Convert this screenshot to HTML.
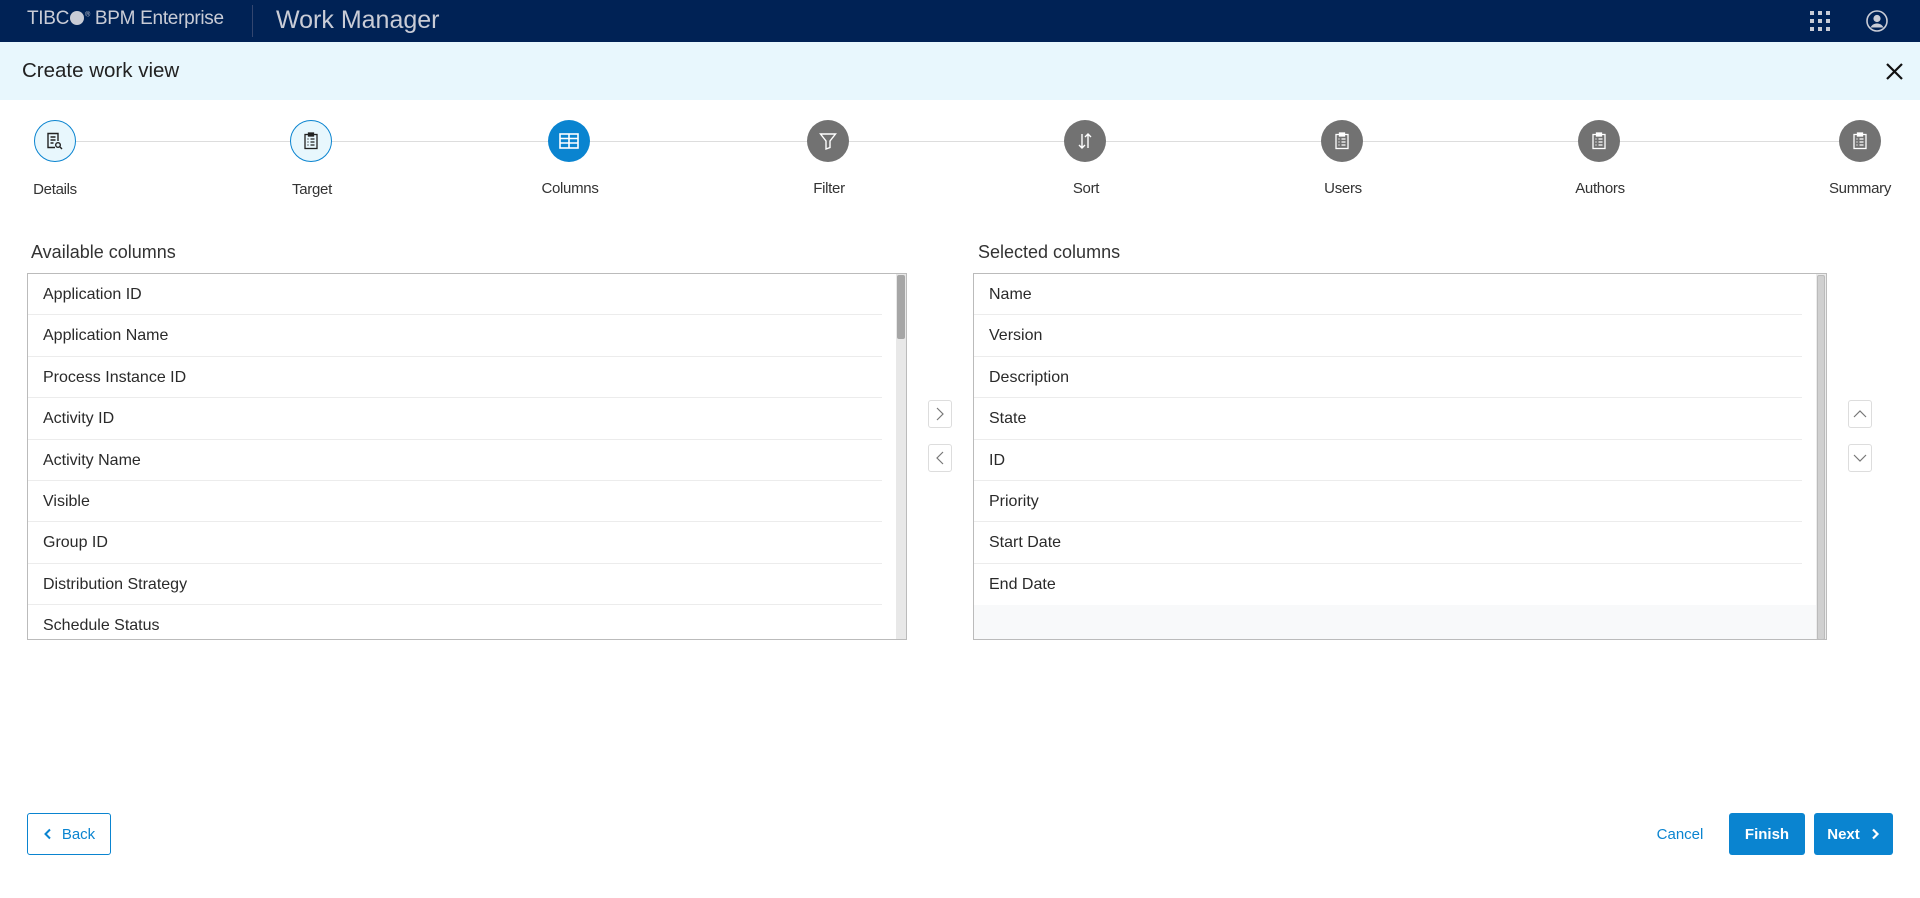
<!DOCTYPE html>
<html><head><meta charset="utf-8"><style>
*{box-sizing:border-box;margin:0;padding:0}
body{width:1920px;height:898px;overflow:hidden;background:#fff;font-family:"Liberation Sans",Arial,sans-serif;position:relative;color:#222}
.hdr{position:absolute;left:0;top:0;width:1920px;height:42px;background:#002255}
.band{position:absolute;left:0;top:42px;width:1920px;height:58px;background:#e8f7fd}
.abs{position:absolute}
.step{position:absolute;top:120px;width:42px;height:42px;border-radius:50%;display:flex;align-items:center;justify-content:center}
.done{background:#e8f7fd;border:1.5px solid #0a84d0}
.cur{background:#0a84d0}
.todo{background:#727272}
.lbl{position:absolute;top:180px;font-size:15px;color:#333;transform:translateX(-50%);white-space:nowrap;letter-spacing:-0.3px}
.box{position:absolute;top:273px;height:367px;border:1px solid #bbb;overflow:hidden}
.row{height:41.4px;line-height:41px;font-size:16px;color:#2a2a2a;padding-left:15px;border-bottom:1px solid #ececec;margin-right:24px}
.sb{position:absolute;border:1px solid #ddd;border-radius:3px;background:#fff}
.btn{position:absolute;top:813px;height:42px;border-radius:3px;font-size:15px;display:flex;align-items:center;justify-content:center}
</style></head><body>
<div class="hdr">
 <div class="abs" style="left:27px;top:8px;font-size:19px;color:#c9ccd6;letter-spacing:-0.3px">TIBC<span style="display:inline-block;width:14px;height:14px;border-radius:50%;background:#c9ccd6;vertical-align:-1px;margin:0 1px"></span><sup style="font-size:7px">®</sup> BPM Enterprise</div>
 <div class="abs" style="left:252px;top:5px;width:1px;height:32px;background:#33466f"></div>
 <div class="abs" style="left:276px;top:6px;font-size:25px;color:#c9ccd6">Work Manager</div>
 <svg class="abs" style="left:1810px;top:11px" width="20" height="20" viewBox="0 0 20 20" fill="#c9ccd6"><rect x="0" y="0" width="4" height="4"/><rect x="8" y="0" width="4" height="4"/><rect x="16" y="0" width="4" height="4"/><rect x="0" y="8" width="4" height="4"/><rect x="8" y="8" width="4" height="4"/><rect x="16" y="8" width="4" height="4"/><rect x="0" y="16" width="4" height="4"/><rect x="8" y="16" width="4" height="4"/><rect x="16" y="16" width="4" height="4"/></svg>
 <svg class="abs" style="left:1866px;top:10px" width="22" height="22" viewBox="0 0 22 22"><circle cx="11" cy="11" r="10" fill="none" stroke="#c9ccd6" stroke-width="1.6"/><circle cx="11" cy="8.5" r="3.6" fill="#c9ccd6"/><path d="M4.5 17.5c1.5-3 4-4 6.5-4s5 1 6.5 4" fill="#c9ccd6"/></svg>
</div>
<div class="band">
 <div class="abs" style="left:22px;top:17px;font-size:20.5px;color:#222">Create work view</div>
 <svg class="abs" style="left:1886px;top:21px" width="17" height="17" viewBox="0 0 17 17"><path d="M1 1L16 16M16 1L1 16" stroke="#111" stroke-width="2.2"/></svg>
</div>
<div class="abs" style="left:60px;top:141px;width:1800px;height:1px;background:#ddd"></div>
<div class="step done" style="left:34px"><svg width="18" height="18" viewBox="0 0 18 18" fill="none" stroke="#222" stroke-width="1.4"><path d="M12 9V1.5H2v14h7"/><path d="M4.5 5h5M4.5 8h5M4.5 11h3"/><circle cx="12" cy="13" r="2.3"/><path d="M13.8 14.8L16 17"/></svg></div>
<div class="step done" style="left:290px"><svg width="16" height="18" viewBox="0 0 16 18" fill="none" stroke="#222" stroke-width="1.3"><rect x="2" y="2.5" width="12" height="14"/><rect x="5.5" y="1" width="5" height="3" fill="#222"/><path d="M4.5 7h1M7.5 7h4M4.5 10h1M7.5 10h4M4.5 13h1M7.5 13h4"/></svg></div>
<div class="step cur" style="left:548px"><svg width="20" height="16" viewBox="0 0 20 16" fill="none" stroke="#fff" stroke-width="1.6"><rect x="1" y="1" width="18" height="14"/><path d="M10 1v14M1 5.5h18M1 10h9M10 10h9"/></svg></div>
<div class="step todo" style="left:807px"><svg width="18" height="18" viewBox="0 0 18 18" fill="none" stroke="#fff" stroke-width="1.4"><path d="M1.5 2h15L11 9v6.5L7 17V9z"/></svg></div>
<div class="step todo" style="left:1064px"><svg width="18" height="18" viewBox="0 0 18 18" fill="none" stroke="#fff" stroke-width="1.4"><path d="M6 2v14M3 13l3 3 3-3M12 16V2M9 5l3-3 3 3"/></svg></div>
<div class="step todo" style="left:1321px"><svg width="16" height="18" viewBox="0 0 16 18" fill="none" stroke="#fff" stroke-width="1.3"><rect x="2" y="2.5" width="12" height="14"/><rect x="5.5" y="1" width="5" height="3" fill="#fff"/><path d="M4.5 7h1M7.5 7h4M4.5 10h1M7.5 10h4M4.5 13h1M7.5 13h4"/></svg></div>
<div class="step todo" style="left:1578px"><svg width="16" height="18" viewBox="0 0 16 18" fill="none" stroke="#fff" stroke-width="1.3"><rect x="2" y="2.5" width="12" height="14"/><rect x="5.5" y="1" width="5" height="3" fill="#fff"/><path d="M4.5 7h1M7.5 7h4M4.5 10h1M7.5 10h4M4.5 13h1M7.5 13h4"/></svg></div>
<div class="step todo" style="left:1839px"><svg width="16" height="18" viewBox="0 0 16 18" fill="none" stroke="#fff" stroke-width="1.3"><rect x="2" y="2.5" width="12" height="14"/><rect x="5.5" y="1" width="5" height="3" fill="#fff"/><path d="M4.5 7h1M7.5 7h4M4.5 10h1M7.5 10h4M4.5 13h1M7.5 13h4"/></svg></div>
<div class="lbl" style="left:55px;top:181px">Details</div>
<div class="lbl" style="left:312px;top:181px">Target</div>
<div class="lbl" style="left:570px">Columns</div>
<div class="lbl" style="left:829px">Filter</div>
<div class="lbl" style="left:1086px">Sort</div>
<div class="lbl" style="left:1343px">Users</div>
<div class="lbl" style="left:1600px">Authors</div>
<div class="lbl" style="left:1860px">Summary</div>

<div class="abs" style="left:31px;top:242px;font-size:18px;color:#333">Available columns</div>
<div class="abs" style="left:978px;top:242px;font-size:18px;color:#333">Selected columns</div>

<div class="box" style="left:27px;width:880px">
 <div class="row">Application ID</div>
 <div class="row">Application Name</div>
 <div class="row">Process Instance ID</div>
 <div class="row">Activity ID</div>
 <div class="row">Activity Name</div>
 <div class="row">Visible</div>
 <div class="row">Group ID</div>
 <div class="row">Distribution Strategy</div>
 <div class="row">Schedule Status</div>
 <div class="abs" style="right:0;top:0;width:10px;height:367px;background:#e8e8e8"></div>
 <div class="abs" style="right:1px;top:1px;width:8px;height:64px;background:#a6a6a6;border-radius:2px"></div>
</div>
<div class="sb" style="left:928px;top:400px;width:24px;height:28px"><svg width="22" height="26" viewBox="0 0 22 26"><path d="M8 7l6 6-6 6" fill="none" stroke="#777" stroke-width="1.2"/></svg></div>
<div class="sb" style="left:928px;top:444px;width:24px;height:28px"><svg width="22" height="26" viewBox="0 0 22 26"><path d="M14 7l-6 6 6 6" fill="none" stroke="#777" stroke-width="1.2"/></svg></div>

<div class="box" style="left:973px;width:854px;background:#f8f9fa">
 <div style="background:#fff;height:331px">
 <div class="row">Name</div>
 <div class="row">Version</div>
 <div class="row">Description</div>
 <div class="row">State</div>
 <div class="row">ID</div>
 <div class="row">Priority</div>
 <div class="row">Start Date</div>
 <div class="row" style="border-bottom:none">End Date</div>
 </div>
 <div class="abs" style="right:0;top:0;width:10px;height:367px;background:#ececec"></div>
 <div class="abs" style="right:1px;top:1px;width:8px;height:365px;background:#d0d0d0;border:1px solid #bbb;border-radius:2px"></div>
</div>
<div class="sb" style="left:1848px;top:400px;width:24px;height:28px"><svg width="22" height="26" viewBox="0 0 22 26"><path d="M5 16l6-6 6 6" fill="none" stroke="#777" stroke-width="1.2"/></svg></div>
<div class="sb" style="left:1848px;top:444px;width:24px;height:28px"><svg width="22" height="26" viewBox="0 0 22 26"><path d="M5 10l6 6 6-6" fill="none" stroke="#777" stroke-width="1.2"/></svg></div>

<div class="btn" style="left:27px;width:84px;border:1px solid #0a84d0;color:#0a84d0;background:#fff"><svg width="10" height="12" viewBox="0 0 10 12" style="margin-right:9px"><path d="M7 1.5L2.5 6 7 10.5" fill="none" stroke="#0a84d0" stroke-width="2"/></svg>Back</div>
<div class="btn" style="left:1650px;width:60px;color:#0a84d0">Cancel</div>
<div class="btn" style="left:1729px;width:76px;background:#0a84d0;color:#fff;font-weight:600">Finish</div>
<div class="btn" style="left:1814px;width:79px;background:#0a84d0;color:#fff;font-weight:600">Next<svg width="10" height="12" viewBox="0 0 10 12" style="margin-left:10px"><path d="M3 1.5L7.5 6 3 10.5" fill="none" stroke="#fff" stroke-width="2.2"/></svg></div>
</body></html>
